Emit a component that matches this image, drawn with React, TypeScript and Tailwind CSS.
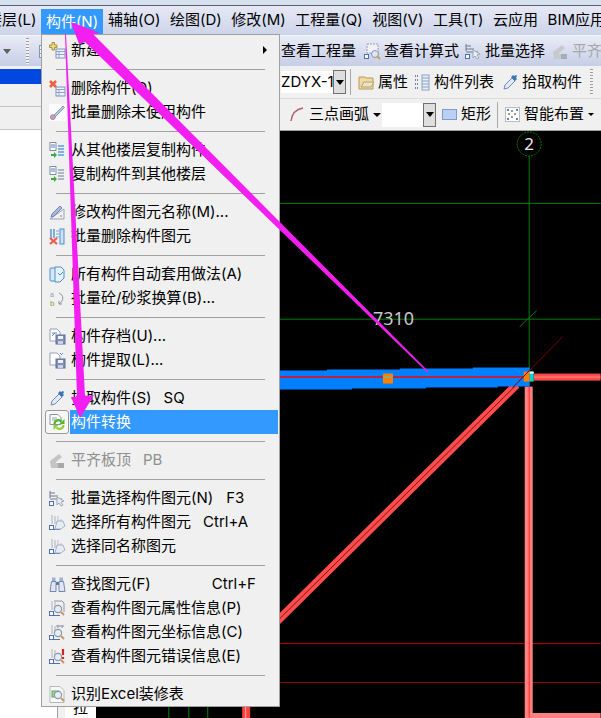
import React from 'react';

type IconName =
  | 'new' | 'remove' | 'brush' | 'copyFrom' | 'copyTo' | 'rename' | 'batchRemove' | 'auto' | 'mix'
  | 'save' | 'load' | 'picker' | 'convert' | 'align' | 'batchSelect' | 'selectAll' | 'selectSame'
  | 'find' | 'queryProp' | 'queryCoord' | 'queryError' | 'excel';

type MenuRow = { label: string; icon: IconName; hint?: string; hintClass?: string; arrow?: boolean; active?: boolean; disabled?: boolean };

const menuGroups: MenuRow[][] = [
  [{ label: '新建', icon: 'new', arrow: true }],
  [
    { label: '删除构件(D)', icon: 'remove' },
    { label: '批量删除未使用构件', icon: 'brush' },
  ],
  [
    { label: '从其他楼层复制构件', icon: 'copyFrom' },
    { label: '复制构件到其他楼层', icon: 'copyTo' },
  ],
  [
    { label: '修改构件图元名称(M)...', icon: 'rename' },
    { label: '批量删除构件图元', icon: 'batchRemove' },
  ],
  [
    { label: '所有构件自动套用做法(A)', icon: 'auto' },
    { label: '批量砼/砂浆换算(B)...', icon: 'mix' },
  ],
  [
    { label: '构件存档(U)...', icon: 'save' },
    { label: '构件提取(L)...', icon: 'load' },
  ],
  [
    { label: '拾取构件(S)', icon: 'picker', hint: 'SQ', hintClass: 'ml-[12px]' },
    { label: '构件转换', icon: 'convert', active: true },
  ],
  [{ label: '平齐板顶', icon: 'align', hint: 'PB', hintClass: 'ml-[12px]', disabled: true }],
  [
    { label: '批量选择构件图元(N)', icon: 'batchSelect', hint: 'F3', hintClass: 'ml-[13px]' },
    { label: '选择所有构件图元', icon: 'selectAll', hint: 'Ctrl+A', hintClass: 'ml-[12px]' },
    { label: '选择同名称图元', icon: 'selectSame' },
  ],
  [
    { label: '查找图元(F)', icon: 'find', hint: 'Ctrl+F', hintClass: 'ml-[61px]' },
    { label: '查看构件图元属性信息(P)', icon: 'queryProp' },
    { label: '查看构件图元坐标信息(C)', icon: 'queryCoord' },
    { label: '查看构件图元错误信息(E)', icon: 'queryError' },
  ],
  [{ label: '识别Excel装修表', icon: 'excel' }],
];

const menuBar = ['辅轴(O)', '绘图(D)', '修改(M)', '工程量(Q)', '视图(V)', '工具(T)', '云应用', 'BIM应用'];

function Table({ x = 7, y = 7 }: { x?: number; y?: number }) {
  return (
    <g>
      <rect x={x} y={y} width="9" height="9" fill="#eef2fa" stroke="#7f93b8" />
      <path d={`M${x} ${y + 2.5}h9M${x} ${y + 5.5}h9M${x + 3} ${y + 2.5}v6.5`} stroke="#8fa3c8" />
    </g>
  );
}

function Magnifier() {
  return (
    <g>
      <circle cx="9" cy="9" r="3.6" fill="#e4eef8" stroke="#8d97a6" strokeWidth="1.2" />
      <path d="M12 12l3 3" stroke="#c9955a" strokeWidth="2" />
    </g>
  );
}

function Corner() {
  return (
    <g>
      <path d="M3 1v9M6 2v8" stroke="#aab2c0" />
      <rect x="0.5" y="11.5" width="4" height="4" fill="#fff" stroke="#4f6fb5" />
      <path d="M5 15.5h6" stroke="#4f6fb5" />
    </g>
  );
}

function MenuIcon({ name }: { name: IconName }) {
  return (
    <svg width="17" height="17" viewBox="0 0 17 17" className="shrink-0">
      {name === 'new' && (
        <g>
          <path d="M3 0.5h2.5v2.5h2.5v2.5h-2.5v2.5h-2.5v-2.5h-2.5v-2.5h2.5z" fill="#f2d77e" stroke="#a58f4a" />
          <Table />
        </g>
      )}
      {name === 'remove' && (
        <g>
          <path d="M1 1l6 6M7 1l-6 6" stroke="#f0603c" strokeWidth="2.6" />
          <Table />
        </g>
      )}
      {name === 'brush' && (
        <g>
          <rect x="0" y="0" width="17" height="17" fill="#fbfbfb" />
          <path d="M4 12L14 2l1.5 1.5L6 13z" fill="#b4c4e0" stroke="#8b9cc0" />
          <circle cx="3.8" cy="13.2" r="2.4" fill="#d59ac0" stroke="#9a8aa8" />
        </g>
      )}
      {(name === 'copyFrom' || name === 'copyTo') && (
        <g>
          <path d="M1 0.5h6v8h-6z" fill="#fff" stroke="#7d8aa0" />
          <path d="M2 3h4M2 5h4" stroke="#5a7fc0" />
          <path d="M9 4h6M9 7h6M9 10h6M9 13h6" stroke={name === 'copyFrom' ? '#5b9bd5' : '#9aa4b2'} strokeWidth="1.6" />
          <path d="M2 12h3v-2l3 3-3 3v-2h-3z" fill="#3da640" />
        </g>
      )}
      {name === 'rename' && (
        <g>
          <path d="M1 15L15 15L15 5z" fill="#eef1f8" stroke="#97a3bd" />
          <path d="M3 10L11 2l2 2-8 8-3 1z" fill="#a9bbdb" stroke="#7487ac" />
          <path d="M11 12h2" stroke="#d4a03a" strokeWidth="1.5" />
        </g>
      )}
      {name === 'batchRemove' && (
        <g>
          <path d="M2 1v9M5 1v9" stroke="#4a90d0" strokeWidth="1.4" />
          <rect x="11" y="1" width="4" height="15" fill="#cfe2f5" stroke="#4a8fd0" />
          <path d="M7 3h3M7 6h3M7 9h3" stroke="#7aa8d0" />
          <path d="M1 10l7 6M8 10l-7 6" stroke="#ee5b44" strokeWidth="2.2" />
        </g>
      )}
      {name === 'auto' && (
        <g>
          <rect x="1" y="2" width="6" height="13" rx="1" fill="#d6e7f7" stroke="#4a90c8" />
          <path d="M6 1h6l3 3v8l-4 4h-5z" fill="#e9f2fb" stroke="#4a90c8" />
          <path d="M9 7l2 2 3-3" stroke="#4a90c8" fill="none" />
        </g>
      )}
      {name === 'mix' && (
        <g>
          <text x="1" y="7" fontSize="7" fill="#8d9ab0" fontFamily="'Liberation Sans',sans-serif">a</text>
          <text x="1" y="16" fontSize="8" fill="#7aa33f" fontFamily="'Liberation Sans',sans-serif">b</text>
          <path d="M10 3c5 2 5 8 0 11M10 14l0-3M10 14l3 0" stroke="#8a8f99" fill="none" />
        </g>
      )}
      {(name === 'save' || name === 'load') && (
        <g>
          <path d="M1 1h7l3 3v9h-10z" fill="#fff" stroke="#95a1b5" />
          <path d={name === 'save' ? 'M3 5h5M3 8l3-3' : 'M11 1l2 2M14 1l-2 2'} stroke="#5b8ac9" />
          <rect x="7" y="7" width="9" height="9" fill="#7f8fb6" stroke="#5f6f95" />
          <rect x="9" y="8" width="5" height="3" fill="#eef2f8" />
          <rect x="9" y="13" width="5" height="3" fill="#c8d0e0" />
        </g>
      )}
      {name === 'picker' && (
        <g>
          <path d="M2 15l1-4 7-7 3 3-7 7z" fill="#e3eaf7" stroke="#6d89bd" />
          <path d="M9 3l4 4 2-2-1-1 1-2-1-1-2 1-1-1z" fill="#3f74b8" />
        </g>
      )}
      {name === 'convert' && (
        <g>
          <path d="M1 0.5h8l3 3v7h-11z" fill="#fff" stroke="#8a93a6" />
          <path d="M3 4h5M3 6h4" stroke="#8fa0b8" />
          <path d="M5.5 10a4 4 0 0 1 7-2.5" fill="none" stroke="#4fb52a" strokeWidth="2.2" />
          <path d="M15.5 5v5h-5z" fill="#4fb52a" />
          <path d="M14.5 11a4 4 0 0 1-7 2.5" fill="none" stroke="#8fd32f" strokeWidth="2.2" />
          <path d="M4.5 16v-5h5z" fill="#8fd32f" />
        </g>
      )}
      {name === 'align' && (
        <g fill="#c4c4c4">
          <path d="M1 9l9-7 3 3-6 5v1h8v5h-13z" />
          <rect x="9" y="11" width="6" height="5" fill="#a9a9a9" />
        </g>
      )}
      {name === 'batchSelect' && (
        <g>
          <path d="M1 1v7M1 3h5M1 6h8M1 9h12" stroke="#6f7a8c" />
          <rect x="0.5" y="11.5" width="4" height="4" fill="#fff" stroke="#4f6fb5" />
          <path d="M8 7l7 4-3 1 2 3-2 1-2-3-2 2z" fill="#e9eef6" stroke="#9aa6ba" />
        </g>
      )}
      {(name === 'selectAll' || name === 'selectSame') && (
        <g>
          <Corner />
          <path d="M9 2v7M12 5v5" stroke="#b8bfcb" />
          <path d="M8 7h6l2 5-4 3h-6z" fill="#e6ecf6" stroke="#a5afc0" />
        </g>
      )}
      {name === 'find' && (
        <g>
          <rect x="3" y="1.5" width="3.5" height="4" fill="#9fb0d4" />
          <rect x="10.5" y="1.5" width="3.5" height="4" fill="#9fb0d4" />
          <rect x="6.5" y="6" width="4" height="3" fill="#5f6f95" />
          <path d="M2.5 5.5h4.5v10h-6z" fill="#dfe6f4" stroke="#7486b0" />
          <path d="M10 5.5h4.5l1.5 10h-6z" fill="#dfe6f4" stroke="#7486b0" />
        </g>
      )}
      {(name === 'queryProp' || name === 'queryCoord' || name === 'queryError') && (
        <g>
          <Corner />
          {name === 'queryProp' && <path d="M5 1h8l2 2v9" fill="none" stroke="#8a93a6" />}
          {name === 'queryCoord' && <path d="M9 1v3M13 1v3M7 2h8" fill="none" stroke="#8a93a6" />}
          {name === 'queryError' && <path d="M14 1v6M14 9v2" stroke="#e0201c" strokeWidth="2.2" />}
          <Magnifier />
        </g>
      )}
      {name === 'excel' && (
        <g>
          <path d="M1 0.5h10l4 4v12h-14z" fill="#f8f9f8" stroke="#b5bab5" />
          <rect x="3" y="5" width="7" height="6" fill="#9ed59a" stroke="#5eaa5a" />
          <Magnifier />
        </g>
      )}
    </svg>
  );
}

function Row({ row }: { row: MenuRow }) {
  return (
    <div className="flex h-6 items-center">
      <div
        className={
          row.active
            ? 'ml-[3px] flex h-6 w-6 shrink-0 items-center justify-center rounded-[3px] border border-[#9a9a9a] bg-[#f7f7f7]'
            : 'ml-[3px] flex h-6 w-6 shrink-0 items-center justify-center'
        }
      >
        <MenuIcon name={row.icon} />
      </div>
      <div
        className={
          row.active
            ? 'ml-px flex h-6 w-[208px] items-center bg-[#3399ff] pl-[1px] text-white'
            : row.disabled
              ? 'ml-px flex h-6 w-[208px] items-center pl-[1px] text-[#8f8f8f]'
              : 'ml-px flex h-6 w-[208px] items-center pl-[1px] text-black'
        }
      >
        <span className="whitespace-nowrap">{row.label}</span>
        {row.hint && <span className={`whitespace-nowrap ${row.hintClass}`}>{row.hint}</span>}
        {row.arrow && <span className="ml-auto mr-[11px] h-0 w-0 border-y-[4px] border-l-[4px] border-y-transparent border-l-black" />}
      </div>
    </div>
  );
}

function ComponentMenu() {
  return (
    <div className="absolute left-[41px] top-[34px] w-[239px] border border-[#a0a0a0] bg-[#f0f0f0] pt-[3px] text-[15px] leading-6">
      {menuGroups.map((group, i) => (
        <div key={i}>
          {i > 0 && (
            <div className="flex h-[14px] items-center pl-[14px]">
              <div className="h-px w-[209px] bg-[#a0a0a0]" />
            </div>
          )}
          {group.map(row => (
            <Row key={row.label} row={row} />
          ))}
        </div>
      ))}
    </div>
  );
}

function ToolIcon({ kind }: { kind: string }) {
  return (
    <svg width="17" height="17" viewBox="0 0 17 17" className="shrink-0">
      {kind === 'sheet' && (
        <g>
          <rect x="1.5" y="2.5" width="14" height="12" fill="#f2f4fa" stroke="#7f93b8" />
          <path d="M1.5 6.5h14M1.5 10.5h14M6 6.5v8" stroke="#8fa3c8" />
        </g>
      )}
      {kind === 'calc' && (
        <g>
          <path d="M3 1h11v9h-11z" fill="#eef1f7" stroke="#93a0b8" strokeDasharray="2 1" />
          <rect x="0.5" y="11.5" width="4" height="4" fill="#fff" stroke="#4f6fb5" />
          <circle cx="11" cy="11" r="3.5" fill="#dde6f2" stroke="#8d97a6" />
          <path d="M13 13l3 3" stroke="#d09a50" strokeWidth="2" />
        </g>
      )}
      {kind === 'batch' && (
        <g>
          <path d="M1 1v7M1 3h5M1 6h8M1 9h12" stroke="#6f7a8c" />
          <rect x="0.5" y="11.5" width="4" height="4" fill="#fff" stroke="#4f6fb5" />
          <path d="M8 7l7 4-3 1 2 3-2 1-2-3-2 2z" fill="#e9eef6" stroke="#9aa6ba" />
        </g>
      )}
      {kind === 'align' && (
        <g fill="#c6c9ce">
          <path d="M1 9l9-7 3 3-6 5v1h8v5h-13z" />
          <rect x="9" y="11" width="6" height="5" fill="#a9acb2" />
        </g>
      )}
      {kind === 'prop' && (
        <g>
          <path d="M1 3h6l1 1h7v11h-14z" fill="#f1d9a0" stroke="#b79a5e" />
          <path d="M3 13l3-5h10l-3 5z" fill="#e9e3c8" stroke="#b3a473" />
        </g>
      )}
      {kind === 'list' && (
        <g>
          <path d="M1 2h4M1 6h4M1 10h4M1 14h4" stroke="#6f87a8" strokeWidth="2" strokeDasharray="1 1" />
          <rect x="8" y="1" width="7" height="15" fill="#e6edf7" stroke="#8ea3c2" />
          <path d="M8 4h7M8 7h7M8 10h7M8 13h7" stroke="#8ea3c2" />
        </g>
      )}
      {kind === 'picker' && (
        <g>
          <path d="M2 15l1-4 7-7 3 3-7 7z" fill="#e3eaf7" stroke="#6d89bd" />
          <path d="M9 3l4 4 2-2-1-1 1-2-1-1-2 1-1-1z" fill="#3f74b8" />
        </g>
      )}
      {kind === 'rect' && <rect x="1.5" y="3.5" width="14" height="10" fill="#bcd0f2" stroke="#7d9bd2" />}
      {kind === 'smart' && (
        <g>
          <rect x="1.5" y="1.5" width="14" height="14" fill="#fff" stroke="#7f7f7f" strokeDasharray="1 1" />
          <path d="M8 4v2M8 10v2M4 8h2M10 8h2" stroke="#333" />
          <path d="M3 3h2v2h-2zM12 3h2v2h-2zM3 12h2v2h-2zM12 12h2v2h-2z" fill="#5b85c5" />
        </g>
      )}
      {kind === 'arc' && <path d="M2 15C3 7 8 3 14 2" fill="none" stroke="#b4616b" strokeWidth="1.4" />}
    </svg>
  );
}

function Gripper() {
  return <div className="h-[26px] w-[3px] shrink-0 bg-[repeating-linear-gradient(to_bottom,#9a9a9a_0,#9a9a9a_1px,#f4f4f4_1px,#f4f4f4_3px)]" />;
}

function DropButton() {
  return (
    <div className="flex h-[24px] w-[13px] shrink-0 items-center justify-center border border-[#707070] bg-[#dedede]">
      <span className="h-0 w-0 border-x-[4px] border-t-[5px] border-x-transparent border-t-black" />
    </div>
  );
}

function Tool({ kind, label, className, muted }: { kind: string; label: string; className: string; muted?: boolean }) {
  return (
    <div className={`flex items-center gap-[3px] whitespace-nowrap ${className} ${muted ? 'text-[#a8a8a8]' : 'text-black'}`}>
      <ToolIcon kind={kind} />
      <span>{label}</span>
    </div>
  );
}

function CanvasDrawing() {
  return (
    <svg viewBox="96 130 505 588" className="absolute inset-0 h-full w-full">
      {/* axis lines */}
      <path d="M96 202.5H601M96 318.5H601" stroke="#008000" />
      <path d="M529.5 155V370M520 326L537 310" stroke="#008000" />
      <circle cx="529.5" cy="143" r="12" fill="none" stroke="#008000" strokeDasharray="2 1" />
      <text x="529.5" y="149" textAnchor="middle" fontSize="17" fill="#e8e8e8" fontFamily="'Noto Sans',sans-serif">2</text>
      <text x="373" y="324" fontSize="18" fill="#c8c8c8" fontFamily="'Noto Sans',sans-serif">7310</text>
      <path d="M168.5 700V718M188.5 700V718M207.5 700V718" stroke="#008000" />

      {/* red grid lines */}
      <path d="M96 643.5H601" stroke="#cc0000" />
      <path d="M96 682.5H601" stroke="#990000" />

      {/* walls */}
      <rect x="525" y="386" width="8" height="332" fill="#ff8080" />
      <path d="M529.5 386V718" stroke="#ff2020" />
      <rect x="530" y="713" width="71" height="5" fill="#ff8080" />
      <rect x="534" y="373" width="67" height="7" fill="#ff4a4a" />
      <path d="M534 376.5H601" stroke="#ff9090" />
      <path d="M517 384L270 628" stroke="#ff4d4d" strokeWidth="8" />
      <path d="M517 384L270 628" stroke="#8a1010" />
      <rect x="242" y="700" width="8" height="18" fill="#ff4040" />
      <path d="M245.5 700V718" stroke="#ffb0b0" />

      {/* selected beam, the stepped edges come from the screen capture */}
      <path d="M200 370H327V369H400V368H473V367H530V386H498V387H426V388H352V389H200Z" fill="#0080ff" />
      <path d="M200 376.5H530" stroke="#ff0000" strokeWidth="1.5" />
      <rect x="383" y="373" width="10" height="10" fill="#ff8000" />
      <path d="M383 376.5H393" stroke="#40d0c0" />
      <rect x="524" y="371" width="6" height="10" fill="#ff8000" />
      <rect x="530" y="371" width="4" height="10" fill="#10d0c8" />
      <path d="M530 371h4v2h-4z" fill="#ffffff" />
      <path d="M513 387L563 336" stroke="#800000" />
    </svg>
  );
}

function Arrows() {
  return (
    <svg viewBox="0 0 601 718" className="absolute inset-0 h-full w-full">
      <polygon points="71,22 100,33 93,34 429,372 427,372 85,42 79,44" fill="#f31ff0" />
      <polygon points="65,34 66,34 85,396 94,395 80,418 71,397 77,397" fill="#f31ff0" />
    </svg>
  );
}

export default function App() {
  return (
    <div className="relative h-[718px] w-[601px] overflow-hidden bg-white font-['Inter','Noto_Sans_CJK_SC',sans-serif] text-[15px] text-black">
      <div className="h-[5px] bg-[#d6e1ef]" />
      <div className="h-px bg-[#5a6068]" />

      <div className="flex h-[29px] items-center bg-gradient-to-b from-[#e6e9f5] to-[#cdd4ea]">
        <span className="ml-[-13px] w-[54px] shrink-0 whitespace-nowrap">楼层(L)</span>
        <div className="mr-[5px] mt-[3px] flex h-[26px] w-[62px] shrink-0 items-center justify-center whitespace-nowrap bg-[#3399ff] text-white">构件(N)</div>
        <div className="flex gap-[9.5px] whitespace-nowrap">
          {menuBar.map(m => (
            <span key={m}>{m}</span>
          ))}
        </div>
      </div>

      <div className="flex h-[31px] items-center whitespace-nowrap border-t border-[#f4f6fb] bg-gradient-to-b from-[#e9ecf7] to-[#c6cee6] pl-[3px]">
        <span className="h-0 w-0 border-x-[4px] border-t-[5px] border-x-transparent border-t-[#606060]" />
        <div className="ml-[3px] h-[28px] w-px bg-[#b9c0d4]" />
        <div className="ml-[12px]"><Gripper /></div>
        <div className="ml-[9px]"><ToolIcon kind="sheet" /></div>
        <span className="ml-[226px] w-[75px] shrink-0">查看工程量</span>
        <Tool kind="calc" label="查看计算式" className="ml-[8px]" />
        <Tool kind="batch" label="批量选择" className="ml-[6px]" />
        <Tool kind="align" label="平齐板顶" className="ml-[7px]" muted />
      </div>

      <div className="flex h-[652px]">
        <div className="flex w-[58px] shrink-0 flex-col border-r border-[#a0a0a0] bg-white">
          <div className="h-[3px] bg-[#f0f0f0]" />
          <div className="flex h-[15px] items-center justify-end bg-[#0048e0] pr-[6px]">
            <svg width="9" height="10" viewBox="0 0 9 10">
              <path d="M2 .5h5v5h-5zM.5 5.5h8M4.5 5.5v4.5" fill="none" stroke="#fff" />
            </svg>
          </div>
          <div className="h-[23px] border-b border-[#c4c4c4] bg-[#f0f0f0]" />
          <div className="h-[23px] border-b border-[#c4c4c4] bg-[#f0f0f0]" />
        </div>

        <div className="flex min-w-0 flex-1 flex-col">
          <div className="flex h-[32px] shrink-0 items-center whitespace-nowrap bg-[#f0f0f0] pl-[223px]">
            <div className="flex items-center">
              <span className="w-[52px] overflow-hidden bg-white">ZDYX-1</span>
              <DropButton />
            </div>
            <div className="ml-[4px] h-[26px] w-px bg-[#a8a8a8]" />
            <Tool kind="prop" label="属性" className="ml-[7px]" />
            <Tool kind="list" label="构件列表" className="ml-[6px]" />
            <Tool kind="picker" label="拾取构件" className="ml-[8px]" />
            <div className="ml-[8px]"><Gripper /></div>
          </div>

          <div className="flex h-[32px] shrink-0 items-center whitespace-nowrap border-t border-[#dcdcdc] bg-[#f0f0f0] pl-[231px]">
            <ToolIcon kind="arc" />
            <span className="ml-[3px]">三点画弧</span>
            <span className="ml-[4px] h-0 w-0 border-x-[4px] border-t-[4px] border-x-transparent border-t-black" />
            <div className="ml-[1px] flex items-center">
              <div className="h-[24px] w-[41px] bg-white" />
              <DropButton />
            </div>
            <Tool kind="rect" label="矩形" className="ml-[5px]" />
            <div className="ml-[6px] h-[26px] w-px bg-[#a8a8a8]" />
            <Tool kind="smart" label="智能布置" className="ml-[6px]" />
            <span className="ml-[4px] h-0 w-0 border-x-[3px] border-t-[3px] border-x-transparent border-t-black" />
          </div>

          <div className="flex min-h-0 flex-1 border-t border-[#a0a0a0]">
            <div className="flex w-[38px] shrink-0 flex-col justify-end bg-[#f0f0f0] pl-[7px]">
              <div className="flex h-[24px] items-center justify-center bg-white pt-[4px] text-[15px]">拉</div>
            </div>
            <div className="relative flex-1 bg-black">
              <CanvasDrawing />
            </div>
          </div>
        </div>
      </div>

      <ComponentMenu />
      <Arrows />
    </div>
  );
}
